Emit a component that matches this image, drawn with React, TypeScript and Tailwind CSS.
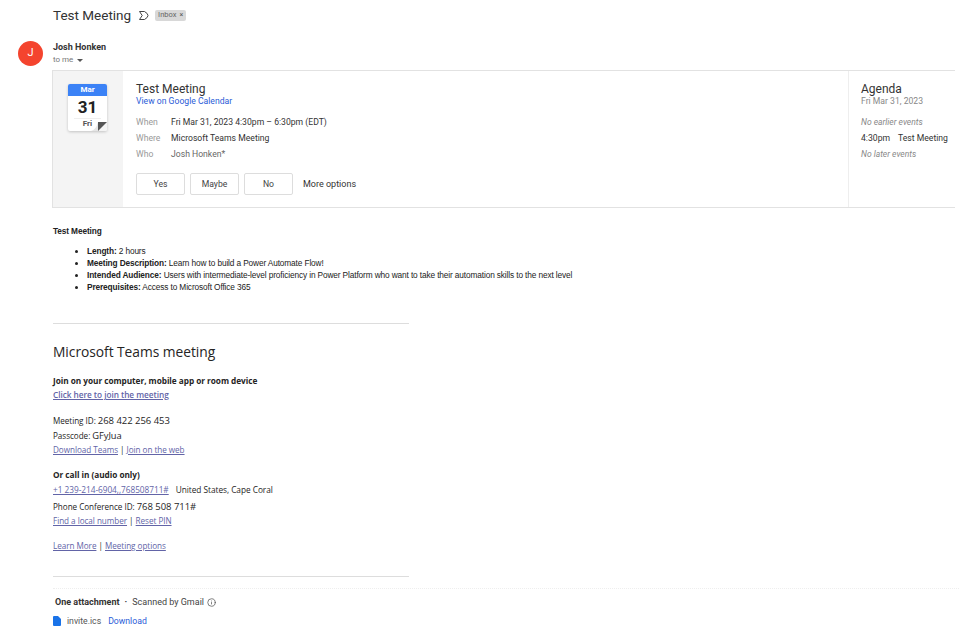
import { Info } from "lucide-react";

const rows = [
  { label: "When", value: "Fri Mar 31, 2023 4:30pm – 6:30pm (EDT)", tone: "text-[#333]" },
  { label: "Where", value: "Microsoft Teams Meeting", tone: "text-[#333]" },
  { label: "Who", value: "Josh Honken*", tone: "text-[#666]" },
];

const bullets = [
  { k: "Length:", v: "2 hours" },
  { k: "Meeting Description:", v: "Learn how to build a Power Automate Flow!" },
  {
    k: "Intended Audience:",
    v: "Users with intermediate-level proficiency in Power Platform who want to take their automation skills to the next level",
  },
  { k: "Prerequisites:", v: "Access to Microsoft Office 365" },
];

function CalendarTile() {
  return (
    <div className="relative mt-[13px] ml-[15px] h-[47px] w-[39px] overflow-hidden rounded-[2px] bg-white shadow-[0_1px_3px_rgba(0,0,0,0.2)]">
      <div className="flex h-[12px] items-center justify-center bg-[#3b82f6] text-[8px] font-bold text-white">Mar</div>
      <div className="mt-[1px] text-center text-[17px] leading-[21px] font-bold text-[#222]">31</div>
      <div className="mx-[6px] border-t border-[#eee]" />
      <div className="text-center text-[8px] leading-[10px] font-bold text-[#555]">Fri</div>
      <svg className="absolute right-0 bottom-0" width="16" height="10" viewBox="0 0 16 10">
        <path d="M16 10 H7 L16 1 Z" fill="#f4f4f4" />
        <path d="M0 10 Q5 9 7 1 L7 10 Z" fill="#e6e6e6" />
        <path d="M7 1 H16 L7 10 Z" fill="#555" />
      </svg>
    </div>
  );
}

function TeamsLink({ children }: { children: React.ReactNode }) {
  return <a className="text-[#6264a7] underline">{children}</a>;
}

export default function App() {
  return (
    <div className="h-[638px] w-[959px] overflow-hidden bg-white font-['Roboto',sans-serif] text-[#222]">
      <div className="flex h-[30px] items-center pl-[53px]">
        <h1 className="text-[13.5px] leading-[30px] text-[#333]">Test Meeting</h1>
        <svg className="ml-[8px]" width="10" height="9" viewBox="0 0 10 9" fill="none" stroke="#444" strokeWidth="1">
          <path d="M0.5 0.5 H5.5 Q9 2.5 9 4.5 Q9 6.5 5.5 8.5 H0.5 L3.2 4.5 Z" />
        </svg>
        <span className="ml-[6px] flex h-[11px] w-[31px] items-center justify-center gap-[3px] rounded-[2px] bg-[#d8d8d8] text-[7.5px] text-[#666]">
          Inbox <span className="text-[7px] text-[#555]">×</span>
        </span>
      </div>

      <div className="mt-[11px] flex pl-[18px]">
        <div className="flex h-[25px] w-[25px] items-center justify-center rounded-full bg-[#f4442e] text-[11px] text-white">J</div>
        <div className="ml-[10px]">
          <div className="text-[9px] leading-[12px] font-bold text-[#333]">Josh Honken</div>
          <div className="mt-[1px] flex items-center gap-[4px] text-[8px] leading-[12px] text-[#777]">
            to me
            <span className="h-0 w-0 border-x-[3px] border-t-[3px] border-x-transparent border-t-[#555]" />
          </div>
        </div>
      </div>

      <div className="mt-[4px] ml-[52px] flex h-[138px] w-[903px] border-y border-l border-[#e2e2e2]">
        <div className="w-[70px] bg-[#f4f4f4]">
          <CalendarTile />
        </div>
        <div className="w-[725px] pt-[11px] pl-[13px]">
          <div className="text-[12px] leading-[14px] text-[#333]">Test Meeting</div>
          <a className="block text-[8.65px] leading-[11px] text-[#2a5bd7]">View on Google Calendar</a>
          <div className="mt-[7px]">
            {rows.map((r) => (
              <div key={r.label} className="flex h-[16px] items-center text-[8.65px]">
                <span className="w-[35px] text-[#999]">{r.label}</span>
                <span className={r.tone}>{r.value}</span>
              </div>
            ))}
          </div>
          <div className="mt-[11px] flex items-center gap-[5px] text-[8.65px] text-[#444]">
            {["Yes", "Maybe", "No"].map((b) => (
              <button key={b} className="flex h-[22px] w-[49px] items-center justify-center rounded-[2px] border border-[#ddd] bg-white">
                {b}
              </button>
            ))}
            <span className="ml-[5px] text-[9px] leading-[22px] text-[#333]">More options</span>
          </div>
        </div>
        <div className="flex-1 border-l border-[#eee] pt-[11px] pl-[12px]">
          <div className="text-[12px] leading-[14px] text-[#333]">Agenda</div>
          <div className="text-[8.65px] leading-[11px] text-[#888]">Fri Mar 31, 2023</div>
          <div className="mt-[7px] text-[8.5px] leading-[16px] text-[#888] italic">No earlier events</div>
          <div className="flex text-[8.65px] leading-[16px] text-[#333]">
            <span className="w-[37px]">4:30pm</span>
            <span>Test Meeting</span>
          </div>
          <div className="text-[8.5px] leading-[16px] text-[#888] italic">No later events</div>
        </div>
      </div>

      <div className="mt-[18px] ml-[53px] font-['Liberation_Sans',sans-serif] text-[8.3px] tracking-[-0.125px] text-[#222]">
        <div className="leading-[11px] font-bold">Test Meeting</div>
        <ul className="mt-[8px] list-disc pl-[34px] leading-[12px]">
          {bullets.map((b) => (
            <li key={b.k}>
              <b>{b.k}</b> {b.v}
            </li>
          ))}
        </ul>
      </div>

      <div className="mt-[30px] ml-[53px] w-[356px] border-t border-[#ddd]" />

      <div className="ml-[53px] font-['Open_Sans',sans-serif] text-[8.15px] tracking-[-0.04px] text-[#252424]">
        <div className="mt-[17px] text-[13.8px] leading-[22px]">Microsoft Teams meeting</div>
        <div className="mt-[11px] text-[8.25px] leading-[13px] font-bold">Join on your computer, mobile app or room device</div>
        <div className="mt-[1px] text-[8.25px] leading-[13px] font-semibold"><TeamsLink>Click here to join the meeting</TeamsLink></div>
        <div className="mt-[13px] leading-[14px]">
          Meeting ID: <span className="text-[9.5px]">268 422 256 453</span>
        </div>
        <div className="mt-[1px] leading-[14px]">
          Passcode: <span className="text-[9.3px]">GFyJua</span>
        </div>
        <div className="leading-[14px]">
          <TeamsLink>Download Teams</TeamsLink> | <TeamsLink>Join on the web</TeamsLink>
        </div>
        <div className="mt-[11px] text-[8.25px] leading-[13px] font-bold">Or call in (audio only)</div>
        <div className="mt-[2px] text-[8.3px] leading-[14px]">
          <TeamsLink>+1 239-214-6904,,768508711#</TeamsLink>
          <span className="ml-[7px]">United States, Cape Coral</span>
        </div>
        <div className="mt-[2px] leading-[15px]">
          Phone Conference ID: <span className="text-[9.5px]">768 508 711#</span>
        </div>
        <div className="leading-[13px]">
          <TeamsLink>Find a local number</TeamsLink> | <TeamsLink>Reset PIN</TeamsLink>
        </div>
        <div className="mt-[12px] leading-[13px]">
          <TeamsLink>Learn More</TeamsLink> | <TeamsLink>Meeting options</TeamsLink>
        </div>
      </div>

      <div className="mt-[24px] ml-[53px] w-[356px] border-t border-[#ddd]" />
      <div className="mt-[11px] ml-[53px] border-t border-dotted border-[#eee]" />

      <div className="mt-[7px] ml-[55px] flex items-center text-[9px] leading-[12px] text-[#444]">
        <span className="font-bold text-[#333]">One attachment</span>
        <span className="mx-[5px] font-bold">·</span>
        <span>Scanned by Gmail</span>
        <Info className="ml-[3px] h-[9px] w-[9px] text-[#555]" />
      </div>
      <div className="mt-[7px] ml-[53px] flex items-center text-[8.7px] leading-[12px]">
        <svg width="8" height="10" viewBox="0 0 8 10">
          <path d="M0 1 a1 1 0 0 1 1-1 H5 L8 3 V9 a1 1 0 0 1-1 1 H1 a1 1 0 0 1-1-1 Z" fill="#1a73e8" />
        </svg>
        <span className="ml-[6px] text-[#555]">invite.ics</span>
        <a className="ml-[7px] text-[#2a5bd7]">Download</a>
      </div>
    </div>
  );
}
